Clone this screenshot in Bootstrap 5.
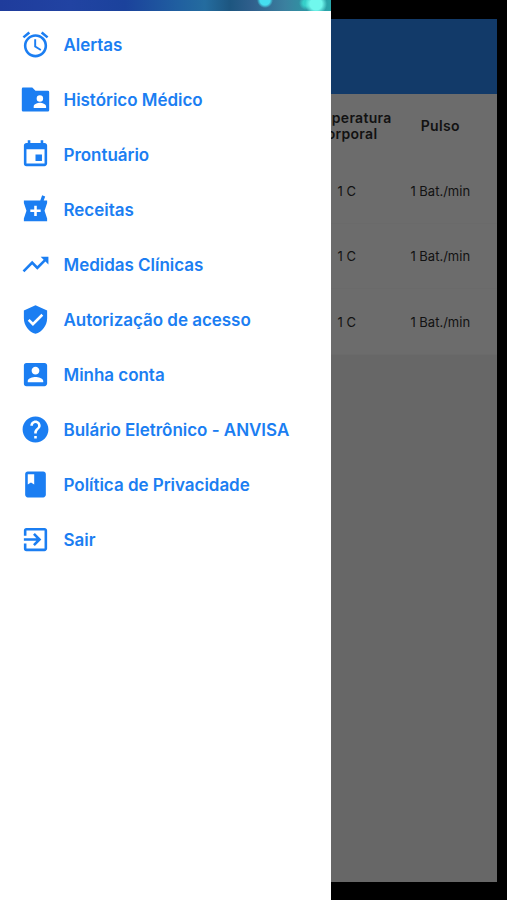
<!DOCTYPE html>
<html lang="pt-BR">
<head>
<meta charset="utf-8">
<meta name="viewport" content="width=device-width, initial-scale=1">
<title>Menu</title>
<link href="https://cdn.jsdelivr.net/npm/bootstrap@5.3.0/dist/css/bootstrap.min.css" rel="stylesheet">
<style>
body{font-family:Inter,"Liberation Sans",sans-serif;background:#000;height:900px;overflow:hidden}
.screen{height:900px;padding:19px 10px 18px 0}
.app{background:#676767}
.app-bar{height:75px;background:#123a69}
.measures{background:#6c6c6c;color:#121212;font-size:13px}
.measures-row{height:65.5px;border-bottom:1px solid #6a6a6a;padding:2px 10px 0 0}
.measures-head{height:64px;font-size:14px;line-height:16px;font-weight:600;letter-spacing:.3px;padding:0 10px 0 0}
.cell{width:93.5px}
.drawer{width:331px;z-index:10}
.banner{height:11px;background:
radial-gradient(circle at 265px 0,#45def0 0 5px,transparent 8px),
radial-gradient(ellipse at 275px 11px,#4cc5dc 0 4px,transparent 10px),
radial-gradient(circle at 316px 4px,#70f8ed 0 6px,transparent 11px),
radial-gradient(circle at 306px 3px,#36cfc9 0 3px,transparent 7px),
linear-gradient(90deg,#1f3c9c 0,#2143a2 70px,#1b429c 125px,#2060a0 180px,#246c9f 205px,#1d5680 230px,#305f8c 252px,#3b809f 285px,#2f93a3 305px,#29a5a9 331px)}
.menu{padding-top:6px}
.menu-link{height:55px;padding-left:20px;gap:12.5px;color:#1b7ef2;font-size:17px;font-weight:600;letter-spacing:-.03px;text-decoration:none;white-space:nowrap}
.menu-link svg{width:31px;height:31px;fill:currentColor;flex:none}
.menu-link span{padding-top:3px}
</style>
<script src="https://cdn.jsdelivr.net/npm/bootstrap@5.3.0/dist/js/bootstrap.bundle.min.js"></script>
</head>
<body>
<main class="screen">
<div class="app h-100">
<div class="app-bar"></div>
<div class="measures">
<div class="measures-head d-flex justify-content-end align-items-center text-center"><div class="cell">Temperatura Corporal</div><div class="cell">Pulso</div></div>
<div class="measures-row d-flex justify-content-end align-items-center text-center"><div class="cell">1 C</div><div class="cell">1 Bat./min</div></div>
<div class="measures-row d-flex justify-content-end align-items-center text-center"><div class="cell">1 C</div><div class="cell">1 Bat./min</div></div>
<div class="measures-row d-flex justify-content-end align-items-center text-center"><div class="cell">1 C</div><div class="cell">1 Bat./min</div></div>
</div>
</div>
</main>
<aside class="drawer position-fixed top-0 start-0 h-100 bg-white">
<div class="banner"></div>
<nav class="menu d-flex flex-column">
<a class="menu-link d-flex align-items-center" href="#"><svg viewBox="0 0 24 24"><path d="M22 5.72l-4.6-3.86-1.29 1.53 4.6 3.86L22 5.72zM7.88 3.39L6.6 1.86 2 5.71l1.29 1.53 4.59-3.85zM12.5 8H11v6l4.75 2.85.75-1.23-4-2.37V8zM12 4c-4.97 0-9 4.03-9 9s4.02 9 9 9a9 9 0 0 0 0-18zm0 16c-3.87 0-7-3.13-7-7s3.13-7 7-7 7 3.13 7 7-3.13 7-7 7z"/></svg><span>Alertas</span></a>
<a class="menu-link d-flex align-items-center" href="#"><svg viewBox="0 0 24 24"><path fill-rule="evenodd" d="M2.3 2.8H9.5L12 5.3h9.6q1 0 1 1v14q0 1-1 1H2.4q-1 0-1-1V3.8q0-1 .9-1zM15.4 8.7a2.5 2.5 0 1 0 0 5 2.5 2.5 0 0 0 0-5zM10.6 18.6h9.6v-1.2c0-1.8-3.2-2.8-4.8-2.8s-4.8 1-4.8 2.8z"/></svg><span>Histórico Médico</span></a>
<a class="menu-link d-flex align-items-center" href="#"><svg viewBox="0 0 24 24"><path d="M17 12h-5v5h5v-5zM16 1v2H8V1H6v2H5c-1.11 0-1.99.9-1.99 2L3 19a2 2 0 0 0 2 2h14c1.1 0 2-.9 2-2V5c0-1.1-.9-2-2-2h-1V1h-2zm3 18H5V8h14v11z"/></svg><span>Prontuário</span></a>
<a class="menu-link d-flex align-items-center" href="#"><svg viewBox="0 0 24 24"><path d="M21 5h-2.64l1.14-3.14L17.15 1l-1.46 4H3v2l2 6-2 6v2h18v-2l-2-6 2-6V5zm-5 9h-3v3h-2v-3H8v-2h3V9h2v3h3v2z"/></svg><span>Receitas</span></a>
<a class="menu-link d-flex align-items-center" href="#"><svg viewBox="0 0 24 24"><path d="M16 6l2.29 2.29-4.88 4.88-4-4L2 16.59 3.41 18l6-6 4 4 6.3-6.29L22 12V6z"/></svg><span>Medidas Clínicas</span></a>
<a class="menu-link d-flex align-items-center" href="#"><svg viewBox="0 0 24 24"><path d="M12 1L3 5v6c0 5.55 3.84 10.74 9 12 5.16-1.26 9-6.45 9-12V5l-9-4zm-2 16l-4-4 1.41-1.41L10 14.17l6.59-6.59L18 9l-8 8z"/></svg><span>Autorização de acesso</span></a>
<a class="menu-link d-flex align-items-center" href="#"><svg viewBox="0 0 24 24"><path d="M3 5v14a2 2 0 0 0 2 2h14c1.1 0 2-.9 2-2V5c0-1.1-.9-2-2-2H5a2 2 0 0 0-2 2zm12 4c0 1.66-1.34 3-3 3s-3-1.34-3-3 1.34-3 3-3 3 1.34 3 3zm-9 8c0-2 4-3.1 6-3.1s6 1.1 6 3.1v1H6v-1z"/></svg><span>Minha conta</span></a>
<a class="menu-link d-flex align-items-center" href="#"><svg viewBox="0 0 24 24"><path d="M12 2C6.48 2 2 6.48 2 12s4.48 10 10 10 10-4.48 10-10S17.52 2 12 2zm1 17h-2v-2h2v2zm2.07-7.75l-.9.92C13.45 12.9 13 13.5 13 15h-2v-.5c0-1.1.45-2.1 1.17-2.83l1.24-1.26c.37-.36.59-.86.59-1.41 0-1.1-.9-2-2-2s-2 .9-2 2H8c0-2.21 1.79-4 4-4s4 1.79 4 4c0 .88-.36 1.68-.93 2.25z"/></svg><span>Bulário Eletrônico - ANVISA</span></a>
<a class="menu-link d-flex align-items-center" href="#"><svg viewBox="0 0 24 24"><path d="M18 2H6c-1.1 0-2 .9-2 2v16c0 1.1.9 2 2 2h12c1.1 0 2-.9 2-2V4c0-1.1-.9-2-2-2zM6 4h5v8l-2.5-1.5L6 12V4z"/></svg><span>Política de Privacidade</span></a>
<a class="menu-link d-flex align-items-center" href="#"><svg viewBox="0 0 24 24"><path d="M10.09 15.59L11.5 17l5-5-5-5-1.41 1.41L12.67 11H3v2h9.67l-2.58 2.59zM19 3H5a2 2 0 0 0-2 2v4h2V5h14v14H5v-4H3v4a2 2 0 0 0 2 2h14c1.1 0 2-.9 2-2V5c0-1.1-.9-2-2-2z"/></svg><span>Sair</span></a>
</nav>
</aside>
</body>
</html>
